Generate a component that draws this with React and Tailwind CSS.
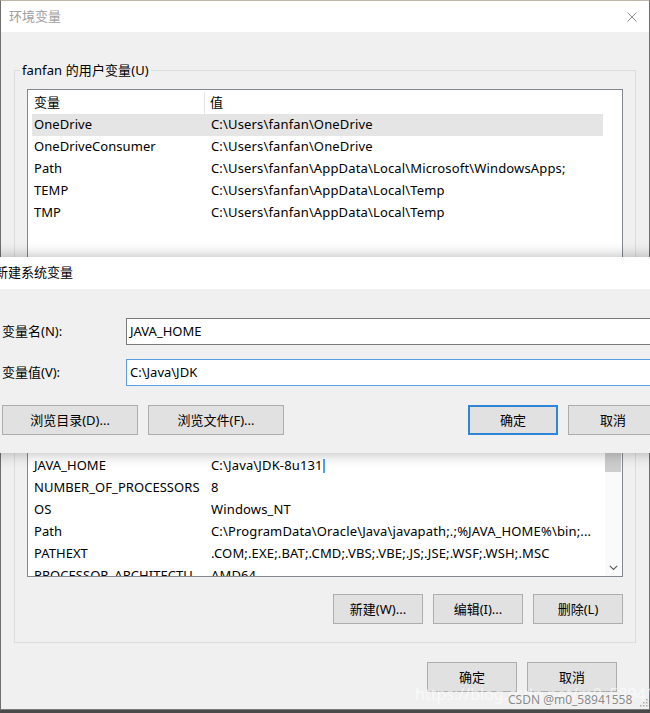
import React from "react";

const userVars = [
  ["OneDrive", "C:\\Users\\fanfan\\OneDrive"],
  ["OneDriveConsumer", "C:\\Users\\fanfan\\OneDrive"],
  ["Path", "C:\\Users\\fanfan\\AppData\\Local\\Microsoft\\WindowsApps;"],
  ["TEMP", "C:\\Users\\fanfan\\AppData\\Local\\Temp"],
  ["TMP", "C:\\Users\\fanfan\\AppData\\Local\\Temp"],
];

const sysVars = [
  ["ComSpec", "C:\\WINDOWS\\system32\\cmd.exe"],
  ["DriverData", "C:\\Windows\\System32\\Drivers\\DriverData"],
  ["JAVA_HOME", "C:\\Java\\JDK-8u131"],
  ["NUMBER_OF_PROCESSORS", "8"],
  ["OS", "Windows_NT"],
  ["Path", "C:\\ProgramData\\Oracle\\Java\\javapath;.;%JAVA_HOME%\\bin;..."],
  ["PATHEXT", ".COM;.EXE;.BAT;.CMD;.VBS;.VBE;.JS;.JSE;.WSF;.WSH;.MSC"],
  ["PROCESSOR_ARCHITECTU...", "AMD64"],
];

function Btn({ children, wide, primary }) {
  return (
    <button
      className={
        (wide ? "w-[136px] " : "w-[90px] ") +
        (primary
          ? "border-2 border-[#2f86d8] "
          : "border border-[#adadad] ") +
        "h-[30px] shrink-0 flex items-center justify-center bg-[#e1e1e1] text-[13px] text-black leading-none"
      }
    >
      {children}
    </button>
  );
}

function Row({ name, value, selected, caret }) {
  return (
    <div
      className={
        (selected ? "bg-[#e5e5e5] " : "") +
        "flex h-[22px] items-center whitespace-nowrap"
      }
    >
      <div className="w-[173px] shrink-0 overflow-hidden pl-[2px] tracking-[0.05px]">{name}</div>
      <div className="flex-1 overflow-hidden pl-[6px] flex items-center tracking-[0.15px]">
        <span>{value}</span>
        {caret && <span className="inline-block w-[2px] h-[14px] bg-[#4aa3f0]" />}
      </div>
    </div>
  );
}

export default function App() {
  return (
    <div className="relative w-[650px] h-[713px] overflow-hidden bg-[#4a4a4a] font-['Noto_Sans','Noto_Sans_CJK_SC',sans-serif] text-[13px] text-black">
      {/* Main window: 环境变量 */}
      <div className="flex flex-col h-[710px] bg-[#f0f0f0] border-x border-[#6f6f6f] border-t border-t-[#bdb5a6] border-b border-b-[#7a7a7a]">
        <div className="h-[31px] shrink-0 bg-white flex items-center justify-between pl-[8px] pr-[12px]">
          <span className="text-[#a0a0a0]">环境变量</span>
          <svg width="10" height="10" viewBox="0 0 10 10">
            <path d="M0.5 0.5 L9.5 9.5 M9.5 0.5 L0.5 9.5" stroke="#8f8f8f" strokeWidth="1" fill="none" />
          </svg>
        </div>

        <div className="flex flex-col px-[13px]">
          {/* User variables */}
          <fieldset className="mt-[29px] border border-[#dcdcdc] pb-[18px]">
            <legend className="ml-[5px] px-[2px] leading-[18px] tracking-[0.1px]">fanfan 的用户变量(U)</legend>
            <div className="mx-[12px] mt-[10px] h-[180px] border border-[#828790] bg-white pl-[4px] pr-[19px]">
              <div className="flex h-[24px] items-center pt-[2px]">
                <div className="w-[173px] shrink-0 pl-[2px] h-full flex items-center border-r border-[#e5e5e5]">变量</div>
                <div className="pl-[5px]">值</div>
              </div>
              {userVars.map((v, i) => (
                <Row key={i} name={v[0]} value={v[1]} selected={i === 0} />
              ))}
            </div>
            <div className="flex justify-end gap-[10px] mt-[17px] mr-[12px]">
              <Btn>新建(N)...</Btn>
              <Btn>编辑(E)...</Btn>
              <Btn>删除(D)</Btn>
            </div>
          </fieldset>

          {/* System variables */}
          <fieldset className="mt-[24px] border border-[#dcdcdc] pb-[18px]">
            <legend className="ml-[5px] px-[2px] leading-[18px]">系统变量(S)</legend>
            <div className="mx-[12px] mt-[10px] h-[190px] border border-[#828790] bg-white flex overflow-hidden">
              <div className="flex-1 pl-[4px] overflow-hidden">
                <div className="flex h-[23px] items-center pt-[2px]">
                  <div className="w-[173px] shrink-0 pl-[2px] h-full flex items-center border-r border-[#e5e5e5]">变量</div>
                  <div className="pl-[5px]">值</div>
                </div>
                {sysVars.map((v, i) => (
                  <Row key={i} name={v[0]} value={v[1]} caret={i === 2} />
                ))}
              </div>
              <div className="w-[17px] shrink-0 bg-[#fafafa] flex flex-col">
                <div className="h-[17px]" />
                <div className="h-[67px] w-[16px] bg-[#cdcdcd]" />
                <div className="flex-1" />
                <div className="h-[17px] flex items-center justify-center">
                  <svg width="9" height="6" viewBox="0 0 9 6">
                    <path d="M0.8 0.8 L4.5 4.5 L8.2 0.8" stroke="#606060" strokeWidth="1.2" fill="none" />
                  </svg>
                </div>
              </div>
            </div>
            <div className="flex justify-end gap-[10px] mt-[17px] mr-[12px]">
              <Btn>新建(W)...</Btn>
              <Btn>编辑(I)...</Btn>
              <Btn>删除(L)</Btn>
            </div>
          </fieldset>

          <div className="flex justify-end gap-[10px] mt-[19px] mr-[19px]">
            <Btn>确定</Btn>
            <Btn>取消</Btn>
          </div>
        </div>
      </div>

      {/* Overlay dialog: 新建系统变量 */}
      <div className="absolute left-[-12px] top-[257px] w-[684px] flex flex-col shadow-[0_0_14px_rgba(0,0,0,0.3)]">
        <div className="h-[32px] bg-white flex items-center pl-[7px]">
          <span>新建系统变量</span>
        </div>
        <div className="h-[164px] bg-[#f0f0f0] px-[14px] pt-[29px] flex flex-col">
          <div className="flex h-[27px] items-center">
            <div className="w-[124px] shrink-0">变量名(N):</div>
            <div className="flex-1 h-[27px] bg-white border border-[#7a7a7a] flex items-center pl-[3px]">JAVA_HOME</div>
          </div>
          <div className="flex h-[27px] items-center mt-[14px]">
            <div className="w-[124px] shrink-0">变量值(V):</div>
            <div className="flex-1 h-[27px] bg-white border border-[#5c9ee2] flex items-center pl-[3px]">C:\Java\JDK</div>
          </div>
          <div className="flex items-center mt-[19px]">
            <div className="flex gap-[10px]">
              <Btn wide>浏览目录(D)...</Btn>
              <Btn wide>浏览文件(F)...</Btn>
            </div>
            <div className="ml-auto flex gap-[10px]">
              <Btn primary>确定</Btn>
              <Btn>取消</Btn>
            </div>
          </div>
        </div>
      </div>

      {/* Resize grip */}
      <svg className="absolute left-[638px] top-[697px]" width="10" height="10" viewBox="0 0 10 10">
        <rect x="8" y="2" width="1.5" height="1.5" fill="#a8a8a8" />
        <rect x="5" y="5" width="1.5" height="1.5" fill="#a8a8a8" />
        <rect x="8" y="5" width="1.5" height="1.5" fill="#a8a8a8" />
        <rect x="2" y="8" width="1.5" height="1.5" fill="#a8a8a8" />
        <rect x="5" y="8" width="1.5" height="1.5" fill="#a8a8a8" />
        <rect x="8" y="8" width="1.5" height="1.5" fill="#a8a8a8" />
      </svg>

      {/* Watermark */}
      <div className="absolute left-[415px] top-[682px] text-[16px] text-white/60 whitespace-nowrap">https://blog.csdn.net/m0_58941558</div>
      <div className="absolute left-[508px] top-[691px] text-[12px] text-[#8a8a8a] whitespace-nowrap [text-shadow:0_0_2px_#fff]">CSDN @m0_58941558</div>
    </div>
  );
}
